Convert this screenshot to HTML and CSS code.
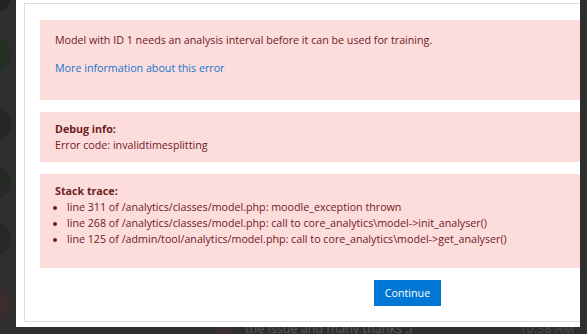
FILE: index.html
```html
<!DOCTYPE html>
<html lang="en">
<head>
<meta charset="utf-8">
<title>Error</title>
<link rel="stylesheet" href="styles.css">
</head>
<body>
<div class="screen">
  <div class="side-left">
    <span class="avatar a1"></span>
    <span class="avatar a2"></span>
    <span class="avatar a3"></span>
    <span class="avatar a4"></span>
    <span class="avatar a5"></span>
    <span class="avatar a6"></span>
  </div>
  <div class="panel">
    <div class="errorbox">
      <div class="alert alert-main">
        <p>Model with ID 1 needs an analysis interval before it can be used for training.</p>
        <p><a class="link" href="#">More information about this error</a></p>
      </div>
      <div class="alert">
        <p class="label">Debug info:</p>
        <p>Error code: invalidtimesplitting</p>
      </div>
      <div class="alert">
        <p class="label">Stack trace:</p>
        <ul class="trace">
          <li>line 311 of /analytics/classes/model.php: moodle_exception thrown</li>
          <li>line 268 of /analytics/classes/model.php: call to core_analytics\model-&gt;init_analyser()</li>
          <li>line 125 of /admin/tool/analytics/model.php: call to core_analytics\model-&gt;get_analyser()</li>
        </ul>
      </div>
      <div class="actions"><button class="btn" type="button">Continue</button></div>
    </div>
  </div>
  <div class="side-right"></div>
</div>
<div class="footer">
  <span class="foot-avatar"></span>
  <span class="foot-msg">the issue and many thanks :)</span>
  <span class="foot-time">10:38 AM</span>
</div>
</body>
</html>
```
FILE: styles.css
```css
html, body {
  margin: 0;
  height: 100%;
  overflow: hidden;
  background: #2f2f2f;
}
body {
  font-family: "Open Sans", "Noto Sans", sans-serif;
  font-size: 10.7px;
  line-height: 16px;
}
.screen {
  display: flex;
  height: 327px;
}
.side-left {
  width: 16px;
  flex: none;
  overflow: hidden;
  display: flex;
  flex-direction: column;
}
.avatar {
  display: block;
  flex: none;
  width: 34px;
  height: 34px;
  border-radius: 50%;
  margin-left: -23px;
}
.a1 { margin-top: -21px; background: #232323; }
.a2 { margin-top: 25px; background: #243024; }
.a3 { margin-top: 35px; background: #262626; }
.a4 { margin-top: 24px; background: #252a25; }
.a5 { margin-top: 23px; background: #282828; }
.a6 { margin-top: 32px; background: #3a2d2d; }
.panel {
  width: 564px;
  flex: none;
  background: #fff;
  overflow: hidden;
  box-sizing: border-box;
  padding: 3px 0 5px 8px;
}
.side-right {
  flex: 1;
}
.errorbox {
  width: 767px;
  height: 319px;
  box-sizing: border-box;
  border: 1px solid #dedede;
  padding: 16px 15px 15px;
}
.alert {
  background: #fddcdc;
  color: #6e211e;
  padding: 9px 15px;
  margin-bottom: 12px;
}
.alert p {
  margin: 0;
}
.alert-main {
  padding: 12px 15px;
}
.alert-main p {
  margin: 0 0 12px;
}
.link {
  color: #1177d1;
  text-decoration: none;
}
.label {
  font-weight: 700;
}
.trace {
  margin: 0 0 12px;
  padding-left: 12px;
}
.actions {
  text-align: center;
}
.btn {
  font-family: inherit;
  font-size: 10.7px;
  line-height: 16px;
  color: #fff;
  background: #0077d4;
  border: none;
  border-radius: 0;
  padding: 5px 11px;
}
.footer {
  height: 7px;
  overflow: hidden;
  display: flex;
  color: #5a5a5a;
  font-size: 12.6px;
  line-height: 12.6px;
}
.foot-avatar {
  flex: none;
  width: 16px;
  height: 16px;
  margin-left: 215px;
  background: #3a3232;
}
.foot-msg {
  margin-left: 14px;
  margin-top: -4px;
}
.foot-time {
  margin-left: auto;
  margin-right: 13px;
  margin-top: -4px;
  color: #4d4d4d;
}
```
